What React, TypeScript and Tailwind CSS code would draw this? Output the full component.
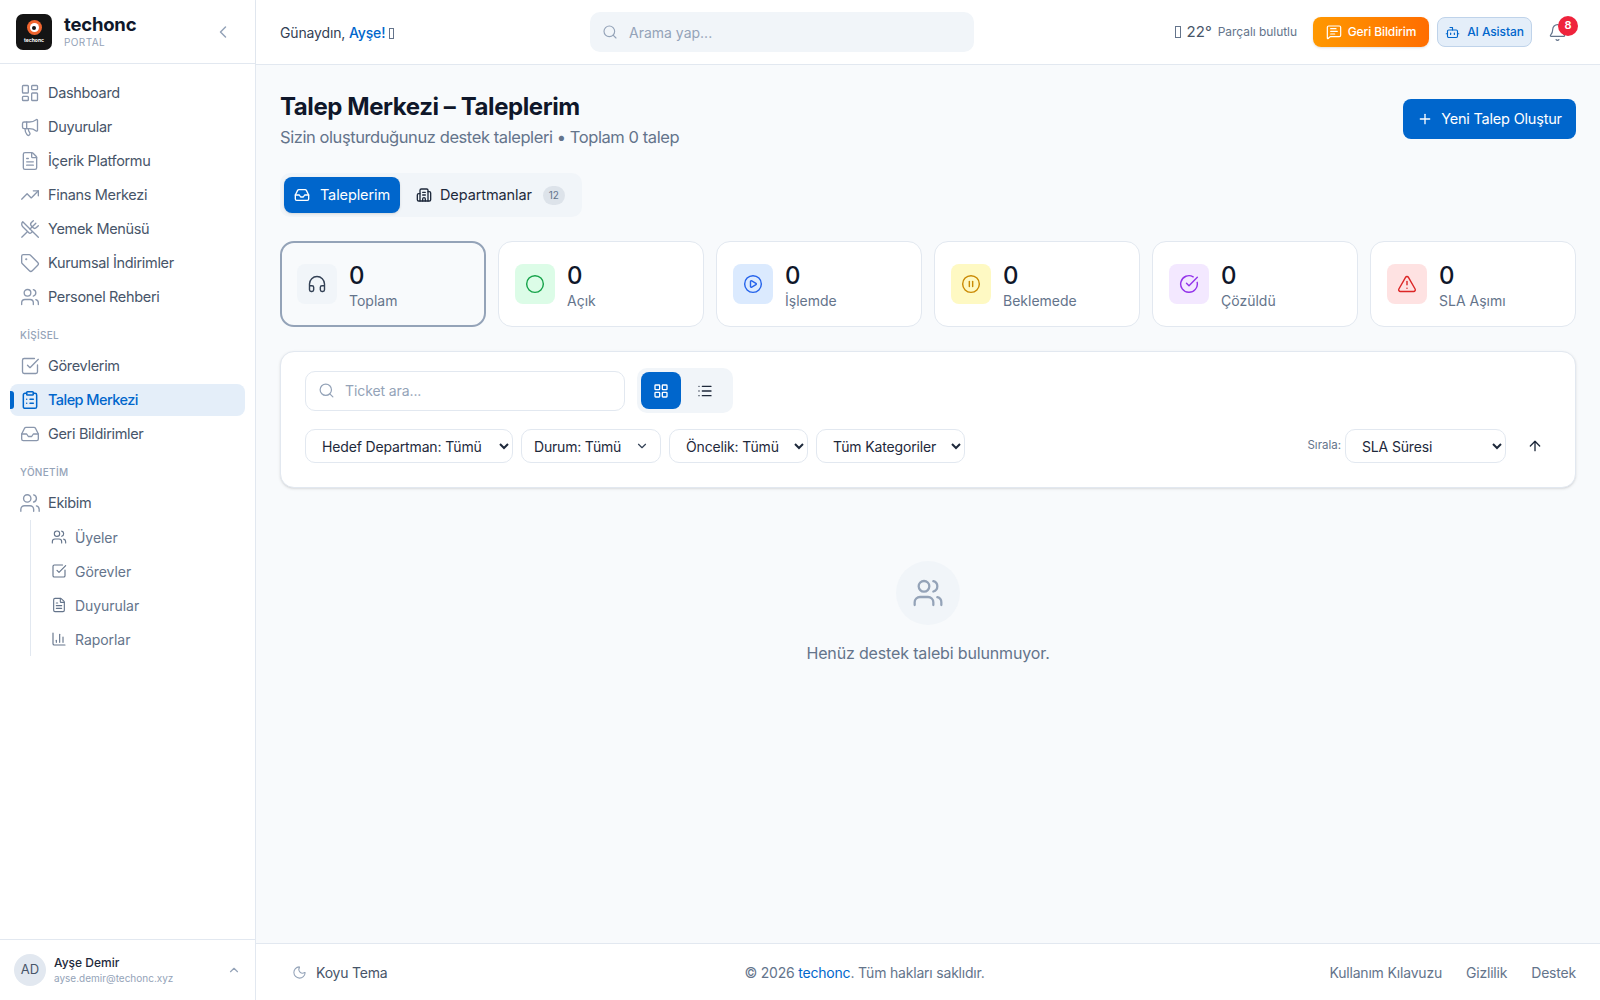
import {
  ArrowUp, Bell, Bot, Building2, ChartColumn, ChevronDown, ChevronLeft, ChevronUp, Circle, CircleCheckBig,
  CirclePause, CirclePlay, ClipboardList, FileText, Headphones, Inbox, LayoutDashboard, LayoutGrid, List,
  Megaphone, MessageSquareText, Moon, Plus, Search, SquareCheckBig, Tag, TrendingUp, TriangleAlert, Users,
  UtensilsCrossed,
} from 'lucide-react';

const mainNav = [
  { label: 'Dashboard', icon: LayoutDashboard },
  { label: 'Duyurular', icon: Megaphone },
  { label: 'İçerik Platformu', icon: FileText },
  { label: 'Finans Merkezi', icon: TrendingUp },
  { label: 'Yemek Menüsü', icon: UtensilsCrossed },
  { label: 'Kurumsal İndirimler', icon: Tag },
  { label: 'Personel Rehberi', icon: Users },
];

const teamNav = [
  { label: 'Üyeler', icon: Users },
  { label: 'Görevler', icon: SquareCheckBig },
  { label: 'Duyurular', icon: FileText },
  { label: 'Raporlar', icon: ChartColumn },
];

const stats = [
  { label: 'Toplam', icon: Headphones, box: 'bg-[#f1f5f9]', color: 'text-[#334155]' },
  { label: 'Açık', icon: Circle, box: 'bg-[#dcfce7]', color: 'text-[#16a34a]' },
  { label: 'İşlemde', icon: CirclePlay, box: 'bg-[#dbeafe]', color: 'text-[#2563eb]' },
  { label: 'Beklemede', icon: CirclePause, box: 'bg-[#fef9c3]', color: 'text-[#ca8a04]' },
  { label: 'Çözüldü', icon: CircleCheckBig, box: 'bg-[#f3e8ff]', color: 'text-[#9333ea]' },
  { label: 'SLA Aşımı', icon: TriangleAlert, box: 'bg-[#fee2e2]', color: 'text-[#dc2626]' },
];

function NavItem({ label, icon: Icon }: { label: string; icon: typeof Tag }) {
  return (
    <a className="flex h-[34px] items-center gap-[8px] pl-[10px] text-[14.5px] tracking-[-0.33px] text-[#475569]">
      <Icon className="h-[20px] w-[20px] text-[#8a97ad]" strokeWidth={1.6} />
      {label}
    </a>
  );
}

function Section({ children, className }: { children: string; className: string }) {
  return <div className={`pl-[10px] text-[10px] font-medium tracking-[0.3px] text-[#94a3b8] ${className}`}>{children}</div>;
}

// the emoji has no font in the reference, it shows as an empty box
function MissingGlyph() {
  return <span className="inline-block h-[11px] w-[5px] border border-[#64748b] align-[-1px]" />;
}

function Sidebar() {
  return (
    <aside className="flex w-[256px] shrink-0 flex-col border-r border-[#e2e8f0] bg-white">
      <div className="flex h-[64px] items-center border-b border-[#e2e8f0] pl-[16px] pr-[22px]">
        <div className="flex h-[36px] w-[36px] flex-col items-center justify-center rounded-[7px] bg-[#141414]">
          <span className="flex h-[15px] w-[15px] items-center justify-center rounded-full bg-[#f0652f]">
            <span className="flex h-[9px] w-[9px] items-center justify-center rounded-full bg-white">
              <span className="h-[4px] w-[4px] rounded-full bg-[#141414]" />
            </span>
          </span>
          <span className="mt-[2px] text-[5px] font-bold leading-[6px] text-white">techonc</span>
        </div>
        <div className="ml-[12px] flex-1">
          <div className="-mt-[1px] text-[18.5px] font-bold leading-[21px] tracking-[-0.2px] text-[#0f172a]">techonc</div>
          <div className="mt-[1px] text-[10px] leading-[13px] tracking-[0.4px] text-[#94a3b8]">PORTAL</div>
        </div>
        <ChevronLeft className="h-[20px] w-[20px] text-[#94a3b8]" strokeWidth={1.8} />
      </div>
      <nav className="flex-1 pl-[10px] pr-[10px] pt-[12px]">
        {mainNav.map((item) => (
          <NavItem key={item.label} {...item} />
        ))}
        <Section className="mb-[6px] mt-[14px]">KİŞİSEL</Section>
        <NavItem label="Görevlerim" icon={SquareCheckBig} />
        <a className="relative my-[1px] flex h-[32px] items-center gap-[8px] rounded-[8px] bg-[#e4eef9] pl-[10px] text-[14.5px] font-medium tracking-[-0.55px] text-[#0066cc]">
          <span className="absolute left-0 top-[7px] h-[18px] w-[4px] rounded-r-[3px] bg-[#0066cc]" />
          <ClipboardList className="h-[20px] w-[20px]" strokeWidth={1.8} />
          Talep Merkezi
        </a>
        <NavItem label="Geri Bildirimler" icon={Inbox} />
        <Section className="mb-[6px] mt-[14px]">YÖNETİM</Section>
        <a className="flex h-[34px] items-center gap-[7px] pl-[9px] text-[14.5px] tracking-[-0.33px] text-[#475569]">
          <Users className="h-[22px] w-[22px] text-[#8a97ad]" strokeWidth={1.5} />
          Ekibim
        </a>
        <div className="ml-[20px] border-l border-[#e2e8f0] pl-[20px]">
          {teamNav.map(({ label, icon: Icon }) => (
            <a key={label} className="flex h-[34px] items-center gap-[8px] text-[14px] tracking-[-0.05px] text-[#64748b]">
              <Icon className="h-[16px] w-[16px]" strokeWidth={1.7} />
              {label}
            </a>
          ))}
        </div>
      </nav>
      <div className="flex h-[61px] items-center border-t border-[#e2e8f0] pl-[14px] pr-[14px]">
        <div className="flex h-[32px] w-[32px] items-center justify-center rounded-full bg-[#e2e8f0] text-[13px] text-[#475569]">AD</div>
        <div className="ml-[8px] flex-1">
          <div className="text-[12px] font-medium leading-[16px] text-[#1e293b]">Ayşe Demir</div>
          <div className="text-[10px] leading-[14px] text-[#94a3b8]">ayse.demir@techonc.xyz</div>
        </div>
        <ChevronUp className="h-[14px] w-[14px] text-[#94a3b8]" />
      </div>
    </aside>
  );
}

function TopBar() {
  return (
    <header className="flex h-[65px] shrink-0 items-center border-b border-[#e2e8f0] bg-white pl-[24px] pr-[24px] shadow-[0_1px_2px_rgba(15,23,42,0.03)]">
      <div className="w-[310px] text-[14px] tracking-[-0.15px] text-[#334155]">
        Günaydın, <span className="font-medium text-[#0066cc]">Ayşe!</span> <MissingGlyph />
      </div>
      <div className="flex h-[40px] w-[384px] items-center rounded-[10px] bg-[#f1f5f9] pl-[12px] text-[14px] text-[#94a3b8]">
        <Search className="h-[16px] w-[16px]" strokeWidth={1.7} />
        <span className="ml-[11px]">Arama yap...</span>
      </div>
      <div className="ml-auto flex items-center">
        <span className="h-[12px] w-[6px] border border-[#64748b]" />
        <span className="ml-[6px] text-[15px] text-[#475569]">22°</span>
        <span className="ml-[6px] text-[12px] tracking-[-0.05px] text-[#64748b]">Parçalı bulutlu</span>
        <button className="ml-[16px] flex h-[30px] w-[116px] items-center justify-center gap-[6px] rounded-[8px] bg-gradient-to-r from-[#ff9800] to-[#ff6d00] text-[12px] font-medium tracking-[-0.1px] text-white shadow-sm">
          <MessageSquareText className="h-[16px] w-[16px]" strokeWidth={1.8} />
          Geri Bildirim
        </button>
        <button className="ml-[8px] flex h-[30px] w-[95px] items-center justify-center gap-[7px] rounded-[8px] border border-[#bfd3ea] bg-[#e4eef9] text-[12px] font-medium tracking-[-0.1px] text-[#0066cc]">
          <Bot className="h-[15px] w-[15px]" strokeWidth={1.8} />
          AI Asistan
        </button>
        <div className="relative ml-[16px] mr-[9px]">
          <Bell className="h-[19px] w-[19px] text-[#64748b]" strokeWidth={1.5} />
          <span className="absolute -right-[11px] -top-[7px] flex h-[20px] w-[20px] items-center justify-center rounded-full bg-[#ef233c] text-[11px] font-semibold text-white">8</span>
        </div>
      </div>
    </header>
  );
}

function NativeSelect({ label, className }: { label: string; className: string }) {
  return (
    <select className={`h-[34px] rounded-[10px] border border-[#e2e8f0] bg-white pl-[12px] text-[14px] tracking-[-0.15px] text-[#1e293b] ${className}`}>
      <option>{label}</option>
    </select>
  );
}

function TicketsPage() {
  return (
    <main className="flex-1 bg-[#f8fafc] px-[24px] pt-[24px]">
      <div className="flex items-start justify-between">
        <div>
          <h1 className="mt-[2px] text-[24px] font-bold leading-[32px] tracking-[-0.42px] text-[#0f172a]">Talep Merkezi – Taleplerim</h1>
          <p className="text-[16.5px] leading-[28px] tracking-[-0.42px] text-[#64748b]">Sizin oluşturduğunuz destek talepleri • Toplam 0 talep</p>
        </div>
        <button className="mt-[10px] flex h-[40px] w-[173px] items-center justify-center gap-[8px] rounded-[8px] bg-[#0066cc] text-[14.5px] tracking-[-0.2px] text-white">
          <Plus className="h-[16px] w-[16px]" />
          Yeni Talep Oluştur
        </button>
      </div>

      <div className="mt-[22px] inline-flex h-[44px] items-center rounded-[10px] bg-[#f1f5f9] p-[4px]">
        <button className="flex h-[36px] w-[116px] items-center justify-center gap-[10px] rounded-[8px] bg-[#0066cc] text-[14.5px] tracking-[-0.1px] text-white shadow-sm">
          <Inbox className="h-[16px] w-[16px]" />
          Taleplerim
        </button>
        <button className="flex h-[36px] w-[178px] items-center pl-[16px] text-[14.5px] tracking-[-0.1px] text-[#1e293b]">
          <Building2 className="h-[16px] w-[16px]" />
          <span className="ml-[8px]">Departmanlar</span>
          <span className="ml-[11px] flex h-[19px] w-[22px] items-center justify-center rounded-full bg-[#dde3ea] text-[10px] text-[#64748b]">12</span>
        </button>
      </div>

      <div className="mt-[24px] grid grid-cols-6 gap-[12px]">
        {stats.map(({ label, icon: Icon, box, color }, i) => (
          <div
            key={label}
            className={`flex h-[86px] items-center rounded-[14px] ${i === 0 ? 'border-2 border-[#94a3b8] bg-[#f8fafc] pl-[15px]' : 'border border-[#e2e8f0] bg-white pl-[16px]'}`}
          >
            <div className={`flex h-[40px] w-[40px] items-center justify-center rounded-[8px] ${box}`}>
              <Icon className={`h-[20px] w-[20px] ${color}`} strokeWidth={1.7} />
            </div>
            <div className="ml-[12px] mt-[4px]">
              <div className="text-[24px] font-medium leading-[30px] text-[#0f172a]">0</div>
              <div className="text-[14px] leading-[20px] text-[#64748b]">{label}</div>
            </div>
          </div>
        ))}
      </div>

      <div className="mt-[24px] h-[137px] rounded-[14px] border border-[#e2e8f0] bg-white px-[24px] pt-[16px] shadow-sm">
        <div className="flex items-center gap-[12px]">
          <div className="flex h-[40px] w-[320px] items-center rounded-[10px] border border-[#e2e8f0] pl-[12px] text-[14px] tracking-[-0.1px] text-[#94a3b8]">
            <Search className="h-[17px] w-[17px]" strokeWidth={1.7} />
            <span className="ml-[10px]">Ticket ara...</span>
          </div>
          <div className="flex h-[45px] items-center rounded-[10px] bg-[#f1f5f9] p-[4px]">
            <span className="flex h-[37px] w-[40px] items-center justify-center rounded-[8px] bg-[#0066cc] text-white">
              <LayoutGrid className="h-[16px] w-[16px]" />
            </span>
            <span className="flex h-[37px] w-[48px] items-center justify-center text-[#1e293b]">
              <List className="h-[16px] w-[16px]" />
            </span>
          </div>
        </div>
        <div className="mt-[16px] flex items-center gap-[8px]">
          <NativeSelect label="Hedef Departman: Tümü" className="w-[208px]" />
          <div className="relative">
            <select className="h-[34px] w-[140px] appearance-none rounded-[10px] border border-[#e2e8f0] bg-white pl-[12px] text-[14px] tracking-[-0.2px] text-[#1e293b]">
              <option>Durum: Tümü</option>
            </select>
            <ChevronDown className="pointer-events-none absolute right-[12px] top-[10px] h-[14px] w-[14px] text-[#334155]" />
          </div>
          <NativeSelect label="Öncelik: Tümü" className="w-[139px]" />
          <NativeSelect label="Tüm Kategoriler" className="w-[149px]" />
          <span className="ml-auto text-[11.5px] text-[#64748b]">Sırala:</span>
          <NativeSelect label="SLA Süresi" className="-ml-[4px] w-[161px]" />
          <ArrowUp className="ml-[13px] mr-[8px] h-[16px] w-[16px] text-[#1e293b]" />
        </div>
      </div>

      <div className="mt-[73px] flex flex-col items-center">
        <div className="flex h-[64px] w-[64px] items-center justify-center rounded-full bg-[#f1f5f9]">
          <Users className="h-[32px] w-[32px] text-[#94a3b8]" strokeWidth={1.7} />
        </div>
        <p className="mt-[16px] text-[16px] tracking-[-0.15px] text-[#64748b]">Henüz destek talebi bulunmuyor.</p>
      </div>
    </main>
  );
}

function Footer() {
  return (
    <footer className="flex h-[57px] shrink-0 items-center justify-between border-t border-[#e2e8f0] bg-white pl-[36px] pr-[24px] text-[14px] tracking-[-0.2px] text-[#64748b]">
      <div className="flex items-center gap-[9px] text-[#475569]">
        <Moon className="h-[15px] w-[15px] text-[#94a3b8]" strokeWidth={1.7} />
        Koyu Tema
      </div>
      <div className="ml-[12px]">© 2026 <span className="text-[#0066cc]">techonc</span>. Tüm hakları saklıdır.</div>
      <div className="flex gap-[24px]">
        <a>Kullanım Kılavuzu</a>
        <a>Gizlilik</a>
        <a>Destek</a>
      </div>
    </footer>
  );
}

export default function App() {
  return (
    <div className="flex h-screen overflow-hidden font-['Inter',sans-serif]">
      <Sidebar />
      <div className="flex min-w-0 flex-1 flex-col">
        <TopBar />
        <TicketsPage />
        <Footer />
      </div>
    </div>
  );
}
